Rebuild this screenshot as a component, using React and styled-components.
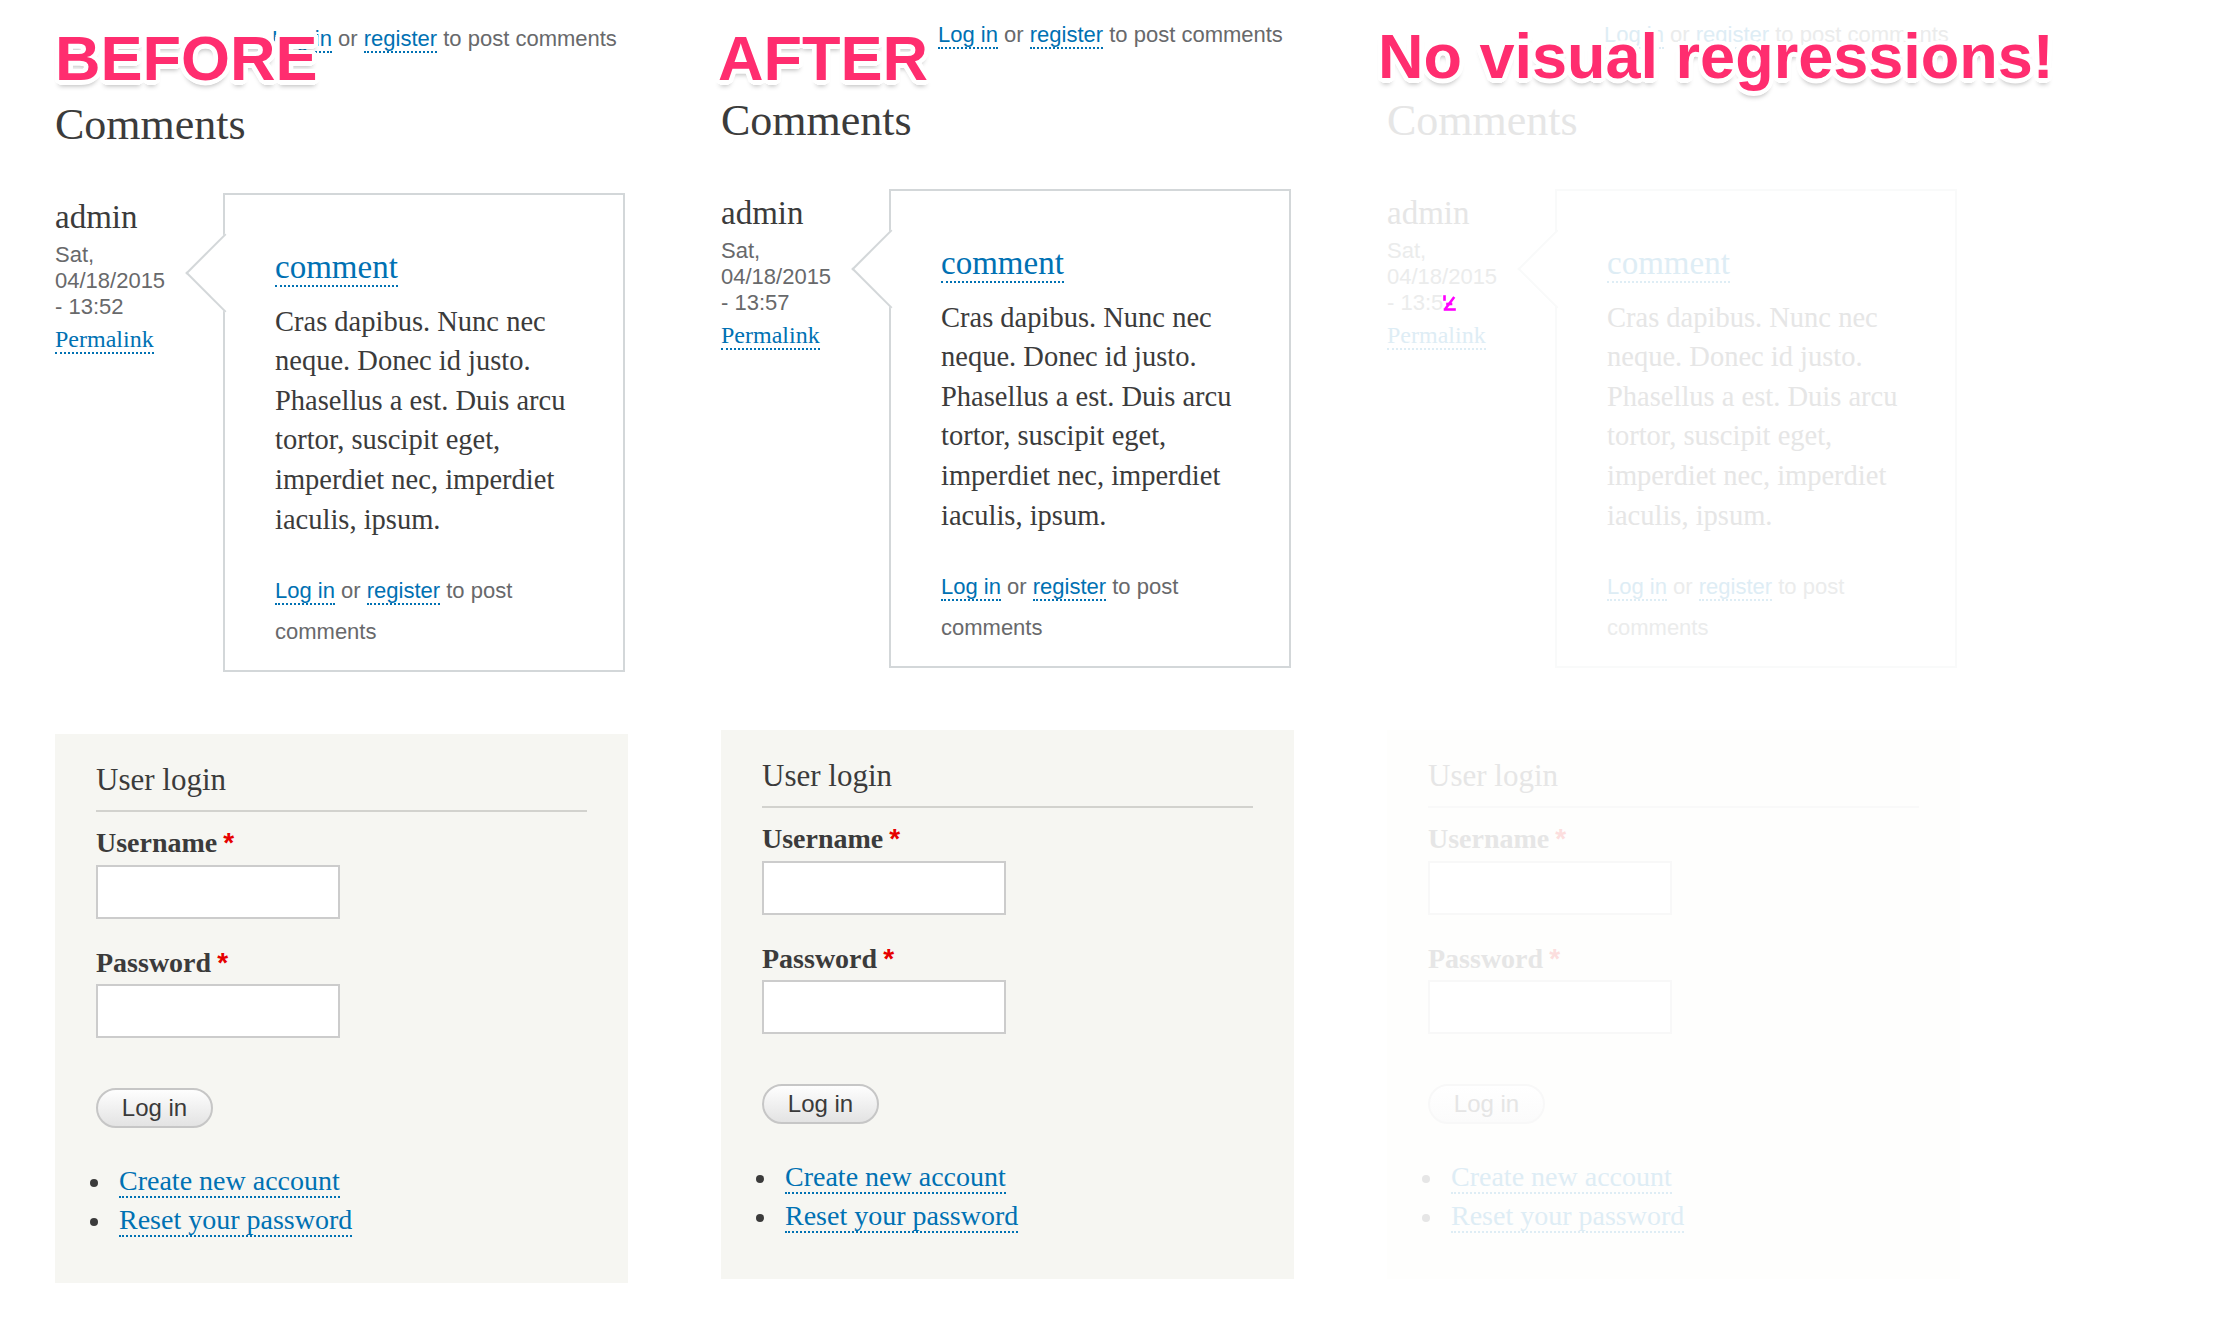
import React from 'react';
import styled, { createGlobalStyle, ThemeProvider } from 'styled-components';

const GlobalStyle = createGlobalStyle`
  html, body { margin: 0; padding: 0; background: #ffffff; }
  body { font-family: "Liberation Serif", "Times New Roman", serif; }
  * { box-sizing: border-box; }
`;

const base = {
  bg: '#ffffff',
  text: '#3b3b3b',
  muted: '#68696b',
  link: '#0071b3',
  border: '#d3d7d9',
  panel: '#f6f6f2',
  rule: '#d2d2ce',
  input: '#cccccc',
  req: '#e60000',
  btnTop: '#fefefe',
  btnBottom: '#e3e3e3',
  btnBorder: '#c6c6c6',
  btnText: '#3a3a3a',
  bullet: '#3b3b3b',
};

function fade(hex, a) {
  const n = parseInt(hex.slice(1), 16);
  const ch = [(n >> 16) & 255, (n >> 8) & 255, n & 255].map((c) =>
    Math.round(255 - a * (255 - c))
  );
  return '#' + ch.map((c) => c.toString(16).padStart(2, '0')).join('');
}

const faded = Object.fromEntries(
  Object.entries(base).map(([k, v]) => [k, fade(v, 0.13)])
);

const outline = (() => {
  const parts = [];
  for (let i = 0; i < 16; i++) {
    const ang = (i / 16) * Math.PI * 2;
    parts.push(
      `${(Math.cos(ang) * 4.5).toFixed(2)}px ${(Math.sin(ang) * 4.5).toFixed(2)}px 0.5px #fff`
    );
  }
  parts.push('0 6px 5px rgba(0,0,0,0.28)');
  return parts.join(', ');
})();

const Page = styled.div`
  display: flex;
  width: 2237px;
  min-height: 1318px;
  background: #fff;
`;

const Panel = styled.section`
  position: relative;
  flex: 0 0 666px;
  width: 666px;
  padding: ${(p) => p.$top}px 0 0 55px;
`;

const Label = styled.div`
  position: absolute;
  top: ${(p) => p.$y}px;
  left: ${(p) => p.$x}px;
  z-index: 3;
  font-family: "Liberation Sans", Arial, sans-serif;
  font-weight: 700;
  font-size: 63px;
  line-height: 1;
  white-space: nowrap;
  color: #ff2d6f;
  text-shadow: ${outline};
`;

const Link = styled.a`
  color: ${(p) => p.theme.link};
  text-decoration: none;
  border-bottom: 2px dotted ${(p) => p.theme.link};
  cursor: pointer;
`;

const Links = styled.div`
  font-family: "Liberation Sans", Arial, sans-serif;
  font-size: 22px;
  line-height: ${(p) => p.$lh}px;
  color: ${(p) => p.theme.muted};
  margin-left: ${(p) => p.$indent || 0}px;
  margin-top: ${(p) => p.$mt || 0}px;
`;

const Heading = styled.h2`
  margin: 47px 0 0;
  font-weight: 400;
  font-size: 44px;
  line-height: 48px;
  color: ${(p) => p.theme.text};
`;

const CommentRow = styled.article`
  display: flex;
  margin-top: 44px;
`;

const Author = styled.div`
  flex: 0 0 168px;
  padding-top: 4px;
`;

const AuthorName = styled.div`
  font-size: 33px;
  line-height: 40px;
  color: ${(p) => p.theme.text};
`;

const DateText = styled.div`
  margin-top: 5px;
  max-width: 118px;
  font-family: "Liberation Sans", Arial, sans-serif;
  font-size: 22px;
  line-height: 26px;
  color: ${(p) => p.theme.muted};
`;

const Permalink = styled.div`
  margin-top: 4px;
  font-size: 24px;
  line-height: 30px;
`;

const Bubble = styled.div`
  position: relative;
  flex: 0 0 402px;
  border: 2px solid ${(p) => p.theme.border};
  background: ${(p) => p.theme.bg};
  padding: 52px 38px 18px 50px;

  &::before {
    content: '';
    position: absolute;
    left: -28px;
    top: 50px;
    width: 54px;
    height: 54px;
    background: ${(p) => p.theme.bg};
    border-left: 2px solid ${(p) => p.theme.border};
    border-bottom: 2px solid ${(p) => p.theme.border};
    transform: rotate(45deg);
  }
`;

const CommentTitle = styled.h3`
  position: relative;
  margin: 0;
  font-weight: 400;
  font-size: 33px;
  line-height: 40px;
`;

const Body = styled.p`
  margin: 14.6px 0 0;
  font-size: 28.5px;
  line-height: 39.6px;
  color: ${(p) => p.theme.text};
`;

const LoginBlock = styled.section`
  margin-top: 62px;
  width: 573px;
  background: ${(p) => p.theme.panel};
  padding: 26.5px 41px 44px 41px;
`;

const BlockTitle = styled.h2`
  margin: 0;
  padding-bottom: 10px;
  border-bottom: 2px solid ${(p) => p.theme.rule};
  font-weight: 400;
  font-size: 31px;
  line-height: 40px;
  color: ${(p) => p.theme.text};
`;

const Field = styled.div`
  margin-top: ${(p) => p.$mt}px;
`;

const FieldLabel = styled.label`
  display: block;
  font-weight: 700;
  font-size: 28px;
  line-height: 34px;
  color: ${(p) => p.theme.text};
`;

const Required = styled.span`
  margin-left: 6px;
  font-family: "Liberation Sans", Arial, sans-serif;
  font-weight: 700;
  font-size: 28px;
  color: ${(p) => p.theme.req};
`;

const Input = styled.input`
  display: block;
  margin-top: 4.4px;
  width: 244px;
  height: 54px;
  border: 2px solid ${(p) => p.theme.input};
  background: #fff;
  outline: none;
  padding: 0 8px;
  font-size: 22px;
`;

const Button = styled.button`
  display: block;
  margin-top: 49.6px;
  width: 117px;
  height: 40px;
  border-radius: 20px;
  border: 2px solid ${(p) => p.theme.btnBorder};
  background: linear-gradient(${(p) => p.theme.btnTop}, ${(p) => p.theme.btnBottom});
  font-family: "Liberation Sans", Arial, sans-serif;
  font-size: 24px;
  line-height: 36px;
  color: ${(p) => p.theme.btnText};
  padding: 0;
`;

const LinkList = styled.ul`
  list-style: none;
  margin: 33px 0 0 -6px;
  padding: 0;
`;

const LinkItem = styled.li`
  font-size: 28px;
  line-height: 39px;

  &::before {
    content: '';
    display: inline-block;
    width: 8px;
    height: 8px;
    border-radius: 50%;
    background: ${(p) => p.theme.bullet};
    margin-right: 21px;
    vertical-align: middle;
  }
`;

const DiffMark = styled.svg`
  width: 13px;
  height: 16px;
  vertical-align: -1px;
`;

function DiffGlyph() {
  return (
    <DiffMark viewBox="0 0 13 16" aria-hidden="true">
      <g stroke="#ff00ff" strokeWidth="2.6" fill="none" strokeLinecap="square">
        <path d="M1.5 1.5 V4.5" />
        <path d="M10.5 3 L3 13" />
        <path d="M2 14.5 H11.5" />
        <path d="M4.5 9 H8" />
      </g>
    </DiffMark>
  );
}

const panels = [
  { label: 'BEFORE', lx: 55, ly: 27, top: 24, time: '13:52', faded: false },
  { label: 'AFTER', lx: 52, ly: 27, top: 20, time: '13:57', faded: false },
  { label: 'No visual regressions!', lx: 46, ly: 25, top: 20, time: '13:5', diff: true, faded: true },
];

function LoginLinks({ lh, indent, mt, tail }) {
  return (
    <Links $lh={lh} $indent={indent} $mt={mt}>
      <Link>Log in</Link> or <Link>register</Link> to post {tail}
    </Links>
  );
}

function PanelView({ p }) {
  return (
    <ThemeProvider theme={p.faded ? faded : base}>
      <Panel $top={p.top}>
        <Label $x={p.lx} $y={p.ly}>{p.label}</Label>
        <LoginLinks lh={30} indent={217} tail="comments" />
        <Heading>Comments</Heading>
        <CommentRow>
          <Author>
            <AuthorName>admin</AuthorName>
            <DateText>
              Sat, 04/18/2015 - {p.time}
              {p.diff && <DiffGlyph />}
            </DateText>
            <Permalink>
              <Link>Permalink</Link>
            </Permalink>
          </Author>
          <Bubble>
            <CommentTitle>
              <Link>comment</Link>
            </CommentTitle>
            <Body>
              Cras dapibus. Nunc nec neque. Donec id justo. Phasellus a est. Duis arcu
              tortor, suscipit eget, imperdiet nec, imperdiet iaculis, ipsum.
            </Body>
            <LoginLinks lh={41} mt={30.7} tail="comments" />
          </Bubble>
        </CommentRow>
        <LoginBlock>
          <BlockTitle>User login</BlockTitle>
          <Field $mt={14}>
            <FieldLabel>
              Username<Required>*</Required>
            </FieldLabel>
            <Input type="text" aria-label="Username" />
          </Field>
          <Field $mt={27}>
            <FieldLabel>
              Password<Required>*</Required>
            </FieldLabel>
            <Input type="password" aria-label="Password" />
          </Field>
          <Button type="button">Log in</Button>
          <LinkList>
            <LinkItem>
              <Link>Create new account</Link>
            </LinkItem>
            <LinkItem>
              <Link>Reset your password</Link>
            </LinkItem>
          </LinkList>
        </LoginBlock>
      </Panel>
    </ThemeProvider>
  );
}

export default function App() {
  return (
    <>
      <GlobalStyle />
      <Page>
        {panels.map((p) => (
          <PanelView key={p.label} p={p} />
        ))}
      </Page>
    </>
  );
}
